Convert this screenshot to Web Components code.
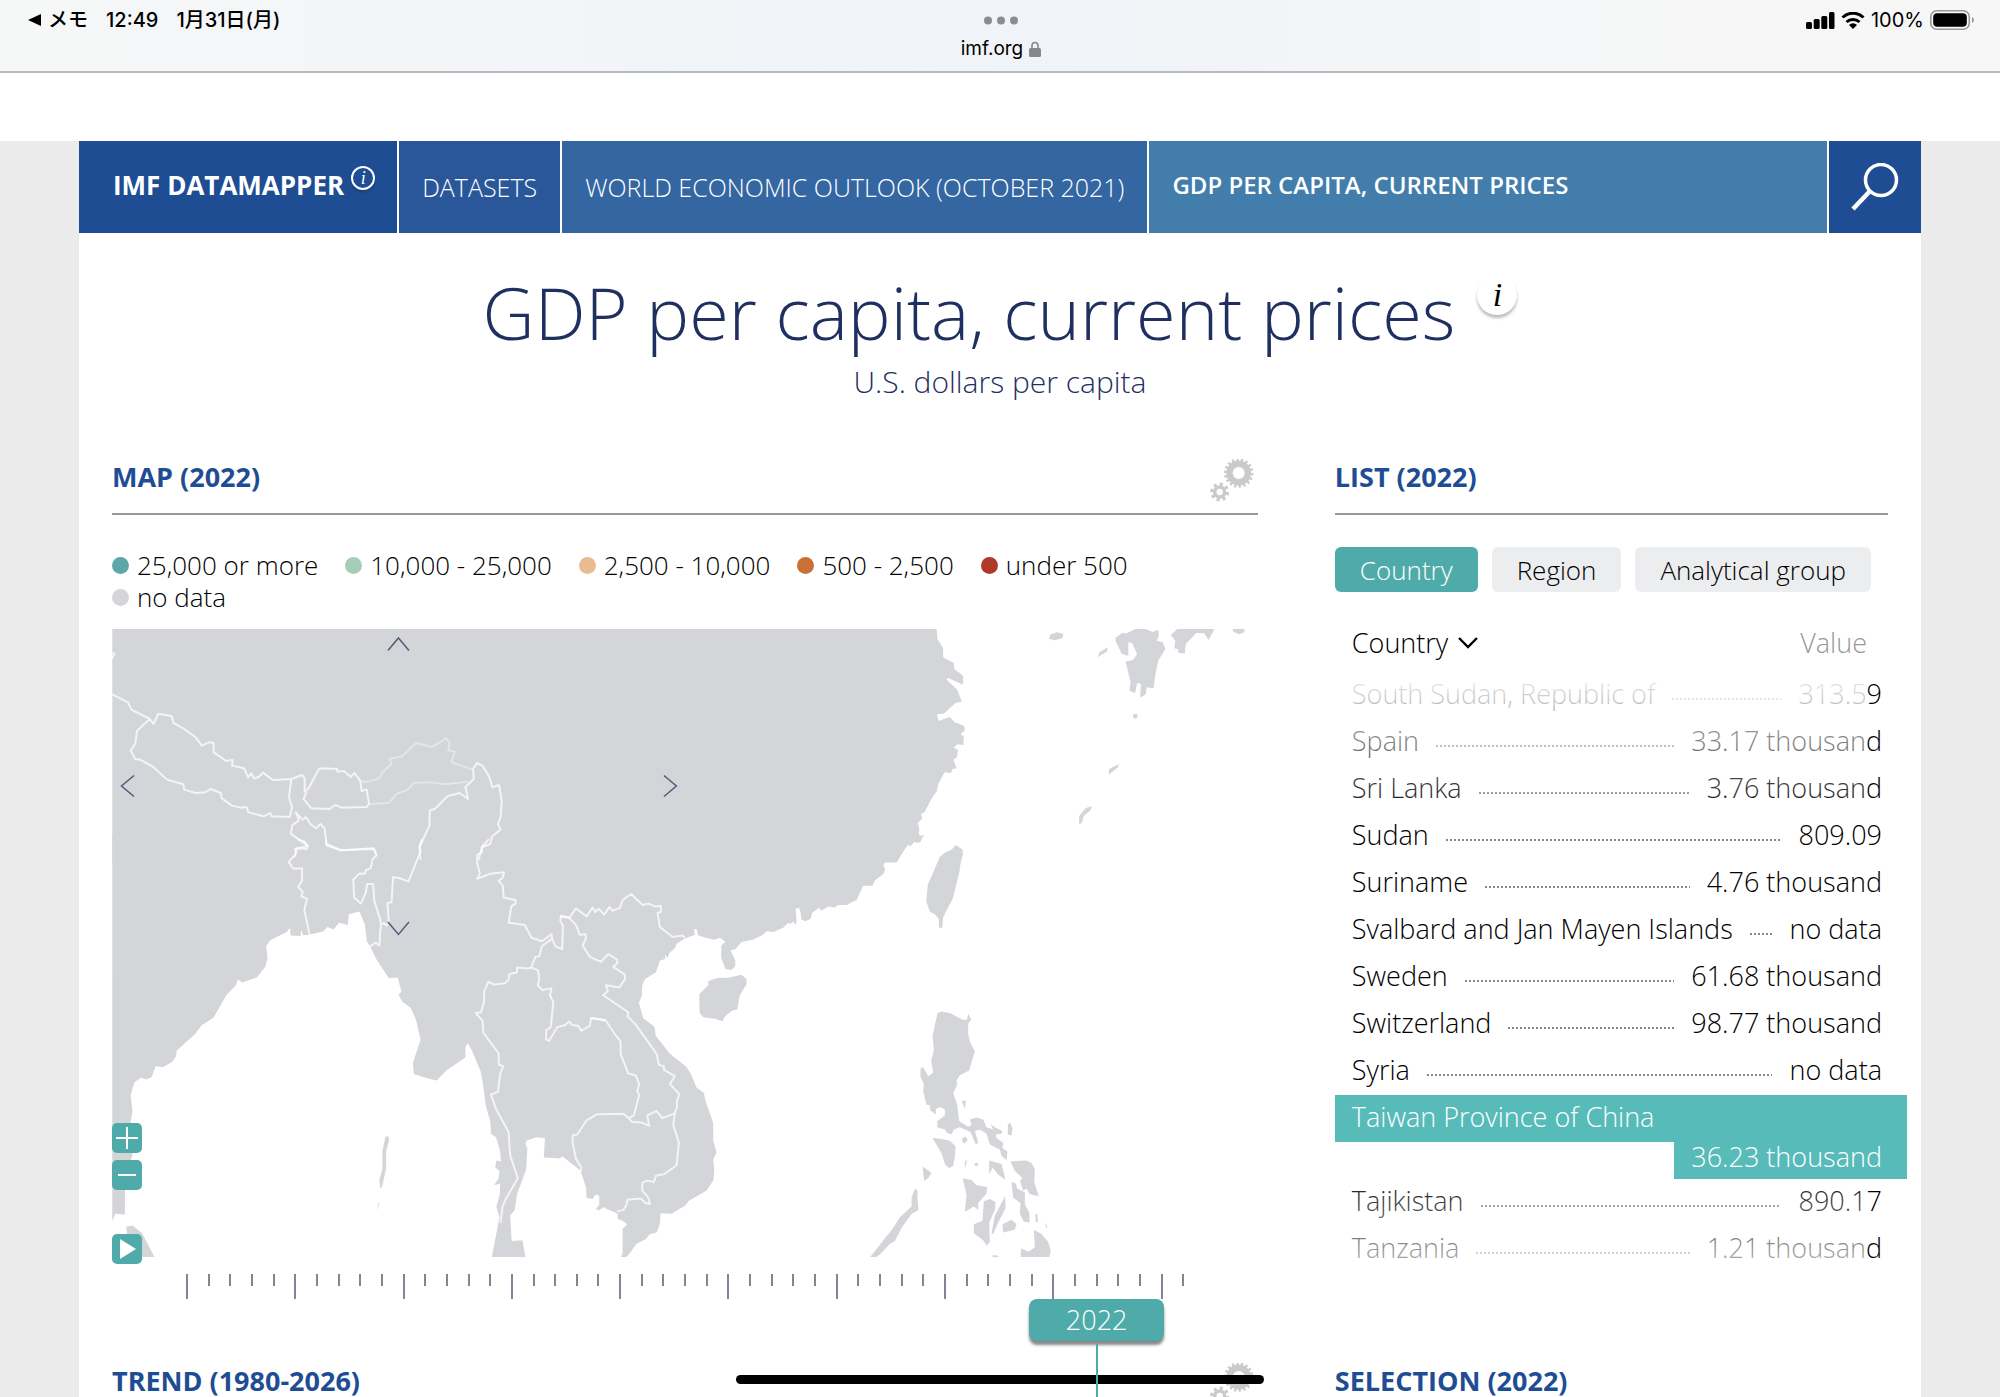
<!DOCTYPE html>
<html lang="en">
<head>
<meta charset="utf-8">
<meta name="viewport" content="width=device-width, initial-scale=1">
<title>GDP per capita, current prices</title>
<style>
:root{
  --font:"Open Sans","Noto Sans",sans-serif;
  --navy:#1f2f5f; --brand:#1f4d93; --teal:#4fabaa; --land:#d4d5d9; --rule:#98989a;
}
body{margin:0;height:100vh;display:flex;flex-direction:column;overflow:hidden;background:#fff;color:#000;font:300 27px/36px var(--font)}
</style>
</head>
<body>
<status-bar></status-bar>
<data-page>
  <data-nav slot="nav"></data-nav>
  <page-title slot="title" heading="GDP per capita, current prices">U.S. dollars per capita</page-title>
  <panel-section heading="MAP (2022)" gears>
    <map-legend></map-legend>
    <world-map></world-map>
    <time-line></time-line>
  </panel-section>
  <panel-section heading="LIST (2022)">
    <group-tabs></group-tabs>
    <country-list></country-list>
  </panel-section>
  <panel-section heading="TREND (1980-2026)" gears></panel-section>
  <panel-section heading="SELECTION (2022)"></panel-section>
</data-page>
<home-indicator></home-indicator>
<script>
const define = (name, render) => customElements.define(name, class extends HTMLElement {
  connectedCallback() {
    const root = this.attachShadow({ mode: 'open' });
    const t = document.createElement('template');
    t.innerHTML = '<style>*{box-sizing:border-box}button{font:inherit;color:inherit;border:0;background:none;padding:0;cursor:pointer}svg{display:block}</style>' + render(this);
    root.append(t.content.cloneNode(true));
  }
});

define('status-bar', () => `
<style>
:host{display:grid;flex:none;grid-template-columns:1fr auto 1fr;height:73px;padding:10px 25px 0 27px;
  border-bottom:2px solid #b9babd;box-sizing:border-box;color:#000;
  background:linear-gradient(90deg,#f6f7f7,#f1f4f8 40%,#f0f3f7 55%,#f5f6f7 75%,#f7f7f7);
  font:500 20px/20px Inter,"Noto Sans CJK JP",sans-serif}
.l,.r{display:flex;align-items:center;height:20px;gap:18px}
.l{font-weight:500}
.l span:first-child{display:flex;align-items:center;gap:6px}
.r{justify-content:flex-end;gap:6px;font-weight:400}
.c{display:flex;flex-direction:column;align-items:center;gap:14px;padding-top:6px;font-size:19px;font-weight:400}
.c div{display:flex;align-items:center;gap:6px}
</style>
<div class="l"><span><svg width="15" height="14"><path d="M14 1v12L1 7z"/></svg>メモ</span><span>12:49</span><span>1月31日(月)</span></div>
<div class="c"><svg width="36" height="9" fill="#8b8c8e"><circle cx="5" cy="4.500" r="4"/><circle cx="18" cy="4.500" r="4"/><circle cx="31" cy="4.500" r="4"/></svg>
<div>imf.org <svg width="12" height="16" fill="#86888b"><rect y="7" width="12" height="9" rx="1.500"/><path d="M3 8V4.500a3 3 0 0 1 6 0V8" fill="none" stroke="#86888b" stroke-width="1.600"/></svg></div></div>
<div class="r"><svg width="29" height="17"><rect x="0" y="10" width="6" height="7" rx="1.500"/><rect x="7.700" y="7" width="6" height="10" rx="1.500"/><rect x="15.300" y="4" width="6" height="13" rx="1.500"/><rect x="23" y="0" width="5.500" height="17" rx="1.500"/></svg>
<svg width="24" height="17" fill="none" stroke="#000" stroke-width="3"><path d="M1.500 5.500a15 15 0 0 1 21 0M5.500 10a9.500 9.500 0 0 1 13 0"/><path d="M12 17l-4-4a5.500 5.500 0 0 1 8 0z" fill="#000" stroke="none"/></svg>
100% <svg width="45" height="20"><rect x=".8" y=".8" width="38.500" height="18.400" rx="6" fill="none" stroke="#97989a" stroke-width="1.600"/><rect x="3.200" y="3.200" width="33.600" height="13.600" rx="4"/><path d="M42 7v6q2-1 2-3t-2-3" fill="#97989a"/></svg></div>`);

define('home-indicator', () => `
<style>:host{position:fixed;left:0;right:0;bottom:13px;display:flex;justify-content:center;pointer-events:none}
div{width:528px;height:9px;border-radius:5px;background:#000}</style><div></div>`);

define('data-page', () => `
<style>
:host{display:flex;flex:1;min-height:0;overflow:hidden;margin-top:68px;padding:0 79px;background:#ebebeb}
main{flex:1;min-width:0;background:#fff}
.grid{display:grid;grid-template-columns:minmax(0,29fr) minmax(0,14fr);column-gap:77px;row-gap:22px;padding:57px 33px 0}
</style>
<main><slot name="nav"></slot><slot name="title"></slot><div class="grid"><slot></slot></div></main>`);

define('info-button', el => `
<style>
:host{display:block}
button{display:block;width:24px;height:24px;border:2px solid #fff;border-radius:50%;color:#fff;
 font:italic 18px/18px "Liberation Serif",serif;text-align:center;box-shadow:0 2px 3px #0003}
:host([large]) button{width:40px;height:40px;border:0;background:#fff;color:#000;font:italic 34px/34px "Liberation Serif",serif;box-shadow:0 3px 3px #0004}
</style><button type="button">i</button>`);

define('data-nav', () => `
<style>
:host{display:block}
nav{display:flex;gap:2px;height:92px;color:#fff;font-size:25px;line-height:32px;white-space:nowrap}
a{color:inherit;text-decoration:none;display:flex;align-items:center;padding:0 23px;background:#29579a}
.home{background:var(--brand);padding:0 22px 4px 34px;gap:7px;font-size:26px;font-weight:700;display:flex;align-items:center}
.home a{background:none;padding:0}
info-button{padding-bottom:14px}
.w{background:#3466a2}
.g{background:#427dab;flex:1;font-size:24px;font-weight:600;padding-bottom:4px}
button{background:var(--brand);width:92px;display:grid;place-items:center;color:#fff}
</style>
<nav><div class="home"><a href="#">IMF DATAMAPPER</a><info-button></info-button></div>
<a href="#">DATASETS</a><a class="w" href="#">WORLD ECONOMIC OUTLOOK (OCTOBER 2021)</a><a class="g" href="#">GDP PER CAPITA, CURRENT PRICES</a>
<button type="button" aria-label="Search"><svg width="48" height="48" fill="none" stroke="#fff" stroke-width="3.500"><circle cx="30" cy="17" r="15.500"/><path d="M19 28L2 46" stroke-width="4.500"/></svg></button></nav>`);

define('page-title', el => `
<style>
:host{display:block;padding-top:35px;text-align:center;color:var(--navy)}
div{display:flex;justify-content:center;gap:22px}
info-button{padding-top:7px}
h1{margin:0;font-size:72px;line-height:88px;font-weight:300}
p{margin:6px 0 0;font-size:30px;line-height:40px}
</style><div><h1>${el.getAttribute('heading')}</h1><info-button large></info-button></div><p><slot></slot></p>`);

define('panel-section', el => `
<style>
:host{display:block;min-width:0}
header{display:flex;justify-content:space-between;align-items:flex-start;height:56px;border-bottom:2px solid var(--rule);padding-right:3px}
h2{margin:0;padding-top:4px;font-size:27px;line-height:28px;font-weight:700;color:var(--brand)}
</style><header><h2>${el.getAttribute('heading')}</h2>${el.hasAttribute('gears') ? `
<button type="button" aria-label="Settings"><svg width="46" height="46" viewBox="0 1 46 46" fill="none" stroke="#cacaca"><g><circle cx="29.700" cy="15" r="9.200" stroke-width="6.400"/><circle cx="29.700" cy="15" r="13.300" stroke-width="3" pathLength="36" stroke-dasharray="1 1"/><circle cx="10.700" cy="34" r="5" stroke-width="3.600"/><circle cx="10.700" cy="34" r="8" stroke-width="3" pathLength="16" stroke-dasharray="1 1"/></g></svg></button>` : ''}</header><slot></slot>`);

define('map-legend', () => `
<style>
:host{display:block;padding:34px 0 16px}
ul{display:flex;flex-wrap:wrap;column-gap:27px;margin:0;padding:0;list-style:none;font-size:26px;line-height:32px}
li{display:flex;align-items:center;gap:8px}
i{width:17px;height:17px;border-radius:50%}
</style><ul>${[['#5fa6ab', '25,000 or more'], ['#a5cdb9', '10,000 - 25,000'], ['#e8bc91', '2,500 - 10,000'], ['#cb7035', '500 - 2,500'], ['#b03929', 'under 500'], ['#d4d5d9', 'no data']]
.map(([c, t]) => `<li><i style="background:${c}"></i>${t}</li>`).join('')}</ul>`);

/* Map sheets: each group holds a part of the map in its own digitising grid. */
define('world-map', () => `
<style>
:host{display:block;position:relative}
svg.map{width:100%;height:auto}
.land{fill:var(--land)}
.line{fill:none;stroke:#fff;stroke-width:2;stroke-linejoin:round;opacity:.75}
.line path,.line{vector-effect:non-scaling-stroke}
.soft{opacity:.4}
.arrows path{fill:none;stroke:#525a78;stroke-width:1.500}
.zoom{position:absolute;left:0;bottom:-7px;display:flex;flex-direction:column;gap:7px}
.zoom button{width:30px;height:30px;border-radius:5px;background:var(--teal);display:grid;place-items:center}
.zoom button:last-child{margin-top:37px}
</style>
<svg class="map" viewBox="0 0 1146 628" role="img" aria-label="Map of East and South Asia">
<g class="land">
<g transform="translate(-12 -190) scale(.38265 .33333)"><path d="M32 570H1700V1270H32z"/></g>
<g transform="translate(568 -190) scale(.38265 .33333)">
<path d="M0 570H671L673 600 688 628V655L716 672 717 690 740 710V737L700 716 697 722 725 752 737 788 720 792 690 824 672 826 676 846 705 834 718 850 742 860 745 874 733 886 742 892 741 918 725 916 716 926 727 932 724 955 715 962 723 988 712 990 709 1002 692 1000 675 1035 672 1055 660 1075 640 1118 630 1126 634 1138 622 1152 626 1172 624 1185 632 1198 628 1210 612 1208 605 1220 597 1208 586 1232 570 1260V1266H0z"/>
<path d="M1138 597L1155 583 1168 583 1190 570H1218L1235 579 1250 572 1252 590 1246 605 1262 610 1269 630 1250 665 1243 705 1238 748 1220 745 1218 765 1203 776 1205 735 1195 732 1190 762 1175 755 1178 730 1165 668 1185 662 1195 645 1182 612 1172 610 1172 650 1155 645 1140 610z"/>
<path d="M1283 588L1300 570H1397L1382 603 1370 583 1350 582 1335 600 1322 615 1320 643 1303 642 1302 630 1292 628 1295 605zM1444 570H1476L1475 580 1462 586 1447 578zM965 600L968 587 985 580 1002 584 1000 597 980 604zM1092 655L1097 640 1118 625 1117 637zM1185 826L1193 824 1197 832 1192 840 1185 836zM1121 1007L1122 990 1147 975 1145 985zM1043 1155L1044 1130 1060 1108 1076 1101 1074 1113 1056 1130 1050 1153z"/></g>
<g transform="translate(-12 210) scale(.38265 .35524)">
<path d="M32-10H1240V920L1208 893 1203 900 1160 897 1163 842 1140 840 1115 850 1112 858 1117 870 1114 930 1090 1000 1084 1045 1072 1060 1076 1132 1104 1130 1112 1178H1024L1044 1065 1036 1035 1045 1000 1046 970 1030 975 1042 955 1044 935 1033 925 1036 905 1048 908 1046 880 1035 840 1022 830 1020 795 1008 750 1001 690 995 655 972 595 961 575 955 585V615L905 652 880 680 860 675 820 662 818 630 838 565 826 510 812 475 790 458 780 438 788 430 778 390 755 392 722 338 706 303 698 290 692 240 678 204 650 212 648 242 625 236 610 255 594 248 585 260 548 270 530 271 526 255 524 273 498 272 497 250 488 262 445 285 434 303 438 335 432 360 410 390 372 404 360 396 355 412 330 440 297 503 265 525 250 548 200 596 199 612 188 628 165 642 145 640 135 670 122 677 107 672 90 685 80 722 85 765 80 800 85 890 65 950V1057L40 1055 32 1078z"/>
<path d="M68 1092L85 1088 110 1110 143 1178H80zM746 838H755L755 850 748 880V925L738 978 732 984 730 960 738 930V880zM727 1022L729 1030 725 1046z"/></g>
<g transform="translate(448 210) scale(.33333 .35524)">
<path d="M0-10H1095L1080 0 1072 12 1055 2 1050 10 1035 28 1010 66H975L970 75 976 84 972 97 945 117 938 132H910L890 172 860 186H835L825 193 805 190 783 203 778 194 757 208 752 225 735 232 724 226 722 206 717 193 707 197 710 228 708 242 700 233 690 240 685 236 670 250 640 262 620 260 605 272 580 283 545 290 527 310 512 314 526 342V358L515 368 497 367 484 335V300L497 290 480 278 462 284 438 278 415 272 410 254H402L405 270 375 280 350 295 345 308 330 320 322 335 315 325 316 338 300 342 288 375 255 395 247 412 246 440 237 462 250 505 283 528 288 555 330 605 380 642 392 660 410 700 432 715 436 735 460 800V850L470 882 460 903 463 930 461 960 440 990 385 1020 376 1032 335 1055 302 1054 300 1085 290 1108 270 1112 258 1126 230 1140 210 1166 198 1178H183L188 1165V1098L202 1085 188 1075 174 1070 172 1054 140 1042 130 1036 118 1046 108 1042 118 1030V1005L108 1000 98 1014 80 1010 78 980 62 935 30 908 8 892H0z"/>
<path d="M545 382L560 395V408L540 440 532 480 517 483 495 500 488 513 465 506 430 502 419 490 418 437 445 412V400L475 391H505z"/></g>
<g transform="translate(748 210) scale(.33333 .35524)">
<path d="M133-5L150 22 165 5 180 10 188-5zM287 17L308 30 309 42 302 70 298 95 290 125 278 170 262 197 250 220 247 250H237V225L225 212 210 205 199 175 204 128 215 105 240 50 256 38 276 30z"/>
<path d="M233 490L245 486 270 490 310 510 322 508 325 492 334 508 325 520V550L332 575 345 597 328 652 300 665 290 680 292 692 280 715 292 748 298 795 325 810 335 805 330 790 350 784 370 790 380 812 400 818 392 803 405 812 427 822 425 830 408 832 410 842 430 855 428 870 443 880 440 905 425 892 420 875 390 860 380 830 360 818 345 822 355 855 348 860 332 825 300 812 282 818 275 832 262 828 255 818 232 812V795L255 778V762L240 755 228 760V776L212 765 210 750 200 748 190 710 192 690 182 670V645L190 643 205 668 220 658 214 625 222 595 218 555 226 520z"/>
<path d="M305 737H318L315 760zM444 803L452 800 458 815 455 835 444 832zM218 842L245 845 270 850 287 865 285 895 280 920 268 927 255 915 245 885zM305 845L318 838 323 850 312 858zM188 922L215 940 205 955 193 962zM315 908L322 903 315 930zM343 915L350 910 356 918 348 922zM388 905L425 915 437 960 415 945 398 925 388 945zM452 908L500 905 515 912 525 930 523 965 537 1006 510 1000 500 985 490 990 480 962 488 955 465 935zM455 965L468 970 472 985 495 995V1030L508 1050 510 1080 492 1078 480 1055 482 1025 460 1010zM308 955L335 960 350 975 382 980 380 998 355 1025 355 1045 342 1035 315 1050 320 1000zM372 1020L390 1014 407 1022 405 1045 388 1080 390 1135 380 1145 370 1130 342 1110 342 1085 368 1075zM436 1005L437 1040 415 1080 400 1112 395 1110 405 1060zM428 1085L455 1072 470 1085 465 1100 430 1108zM526 1058L532 1055 535 1080 528 1078zM555 1080L563 1092 560 1096zM522 1100L545 1112 565 1135 573 1160 568 1178H482L484 1152 505 1162 525 1150zM398 1172H410L420 1178H398zM165 985L173 990V1015L176 1045 155 1056 125 1095 105 1132 90 1140 60 1170 48 1178H30L100 1095 120 1065 155 1035 155 1010z"/></g>
</g>
<g transform="translate(-12 -190) scale(.38265 .33333)">
<path class="line" d="M28 640L38 645 30 660M32 766L73 790 82 812 130 840M130 840L140 855 152 824 187 831 192 852 220 870 250 895 266 920 285 910 297 912V940L330 966 347 962 345 980 377 988 387 1015 395 1003 402 1018 415 1014 426 1001 452 1023 500 1020 528 1008 535 1018V1058L545 1048 572 990 580 988 620 990 620 998 638 996 655 1014 665 1002 680 1025 684 1056 697 1052 703 1095 697 1104 632 1106 615 1098 600 1110 552 1108 532 1080 540 1060M500 1020L494 1075 502 1105 496 1134 448 1132 445 1122 428 1132 388 1120 383 1104 368 1106 345 1100 318 1078 316 1062 290 1050 275 1060 250 1062 220 1052 218 1036 175 1022 137 982 105 962 92 960 80 935 92 915 97 875 130 840M523 1136L512 1120 520 1144 502 1160 499 1185 520 1202 543 1220 540 1230 515 1228 508 1255M512 1122L530 1142 538 1134 550 1155 565 1168 576 1155 587 1168 592 1215 630 1234 715 1230 723 1248M975 990L977 1020 955 1044 962 1080 940 1062 908 1072 875 1110 862 1114 861 1160 835 1225 838 1262M975 990L985 972 1000 980 1018 1015 1025 1045 1043 1038 1050 1085 1047 1135 1040 1155 1047 1172 1025 1192 1020 1215 998 1225 990 1262"/>
<path class="line soft" d="M684 1028L700 1028 730 1018 738 1000 762 975 757 960 790 952 826 912 868 924 905 898 914 912 910 934 928 938 918 970 975 992M703 1095L755 1092 775 1065 805 1052 820 1032 865 1030 900 1036 962 1028"/></g>
<g transform="translate(-12 210) scale(.38265 .35524)">
<path class="line" d="M515 0L535 8 542 20 510 28 512 42 493 65 505 83H528V118L518 134 530 150 526 162 541 168 534 200 548 270M590 0L592 18 630 32 715 26 723 46 712 58 708 82 695 88 692 98 678 97 662 115 664 165 682 182 695 150 698 127H714L717 175 732 225 734 240 730 300 720 292 706 303M734 242L742 236 748 244 755 236 751 180 762 178 766 108 782 110 806 120 838 35 835 20 842 0M1017 0L998 22 998 38 986 45V70L993 97 986 112 1020 98 1056 94 1052 110 1042 118 1053 132 1055 165 1086 172V182L1075 190 1068 236 1110 242 1128 278 1155 288 1180 268 1182 282 1190 302 1208 310 1210 245 1203 230 1205 216 1228 222M1180 282L1155 302 1148 330 1138 332 1127 362 1118 365 1090 362 1090 376 1070 380 1068 396 1058 406 1030 410 1015 402 1004 430 1004 458 996 488 982 490 1000 512 1002 545 1042 604V635L1054 640 1046 660 1040 712 1022 720 1035 760 1068 826 1072 890 1092 955 1060 1015 1052 1035 1047 1080M1127 362L1145 370 1148 395 1144 412 1156 425 1180 420 1176 440 1185 460 1178 530 1166 538V565L1174 568 1195 530 1216 524 1226 514 1234 524 1250 526 1258 540 1280 526 1284 504 1322 510"/></g>
<g transform="translate(448 210) scale(.33333 .35524)">
<path class="line" d="M28 222L0 218M28 222L48 195 80 218 98 193 106 206 115 196 133 213 148 192 158 202 180 194 188 172 214 155 248 186 265 182 285 190 303 188V206L293 208 300 248 338 276 368 272 375 278M28 222L48 242 60 270 77 268 78 280 68 300 90 332 123 346 145 324 172 340V350L160 360 195 382V395L178 418 138 412 144 428 130 440 205 488 203 500 225 520 290 605 297 636 312 640V650L345 668 330 690 358 718 350 742 352 752 345 772 308 786 290 766 262 778 268 808 245 798 215 796 207 786 222 778 238 720 232 710 238 690 228 666 205 660 182 605V570L165 550 138 512 92 504M207 786L190 774 112 775 80 792 52 832 38 834V855L48 900 64 925 62 938M345 772L340 805 357 855 350 918 340 926 312 944 288 948 282 966 262 962 247 968V990L265 1010 270 1028 255 1024 243 1012 202 1016 200 1030 190 1045 172 1048"/></g>
<g class="arrows"><path d="M276 21.500L286.500 9 297 21.500M276 293L286.500 305.500 297 293M22 146.500L9.500 157 22 167.500M552 146.500L564.500 157 552 167.500"/></g>
</svg>
<div class="zoom">
<button type="button" aria-label="Zoom in"><svg width="24" height="24" stroke="#fff" stroke-width="2"><path d="M1 12h22M12 1v22"/></svg></button>
<button type="button" aria-label="Zoom out"><svg width="24" height="24" stroke="#fff" stroke-width="2"><path d="M3 12h18"/></svg></button>
<button type="button" aria-label="Play"><svg width="24" height="24" fill="#fff"><path d="M5 2l16 10L5 22z"/></svg></button>
</div>`);

define('time-line', () => {
  let ticks = '';
  for (let y = 1980; y <= 2026; y++) ticks += `<i${y % 5 ? '' : ' class="l"'}></i>`;
  return `
<style>
:host{display:block;position:relative;padding-top:17px}
.ticks{display:flex;justify-content:space-between;height:25px;padding:0 73px 0 74px}
i{width:2px;height:12px;background:#85829b}
.l{height:25px}
.s{position:relative;height:42px;margin:0 7px}
input{display:block;appearance:none;margin:0;width:100%;height:42px;background:none}
input::-webkit-slider-thumb{appearance:none;width:135px;height:42px;border:0;border-radius:8px;background:var(--teal);box-shadow:0 4px 3px #0007}
label{position:absolute;top:0;left:calc((100% - 135px)*.91304);width:135px;text-align:center;line-height:41px;color:#fff;pointer-events:none;z-index:1}
label::after{content:"";position:absolute;left:67px;top:45px;height:80px;width:2px;background:#4fabaa}
</style><div class="ticks">${ticks}</div><div class="s"><input id="year" type="range" min="1980" max="2026" value="2022"><label for="year">2022</label></div>`;
});

define('group-tabs', () => `
<style>
:host{display:flex;gap:14px;padding-top:32px}
button{height:45px;padding:0 25px;border-radius:6px;background:#ecedef;color:#000;font-size:26px;white-space:nowrap}
.on{background:var(--teal);color:#fff}
</style><button type="button" class="on">Country</button><button type="button">Region</button><button type="button">Analytical group</button>`);

define('country-list', () => `
<style>
:host{display:block;position:relative;margin:28px -19px 0 0;color:#000}
table,thead,tbody{display:block}
thead tr{display:flex;justify-content:space-between;align-items:center;padding:0 40px 0 17px;height:46px;margin-bottom:6px}
th{padding:0;font-weight:inherit}
th button{display:flex;align-items:center;gap:10px}
.v{color:#98989a}
tbody{position:relative}
tbody tr{display:flex;height:47px;padding:0 25px 0 17px;line-height:43px;white-space:nowrap}
td{padding:0}
td:first-child{flex:1;display:flex;gap:17px}
td:first-child::after{content:"";flex:1;height:2px;margin:26px 17px 0 0;background:repeating-linear-gradient(90deg,#888 0 2px,#fff 2px 4px)}
tbody tr.on{position:relative;z-index:1;height:84px;flex-direction:column;align-items:flex-end;padding:0;color:#fff}
.on td:first-child{align-self:stretch;flex:none;height:47px;padding-left:17px;background:#57bbba}
.on td:first-child::after{display:none}
.on td:last-child{height:37px;line-height:30px;padding:0 25px 0 17px;background:#57bbba}
tbody::before,tbody::after{content:"";position:absolute;left:0;right:40px;pointer-events:none}
tbody::before{top:0;height:148px;background:linear-gradient(#fffffff5,#fff0)}
tbody::after{bottom:-34px;height:138px;background:linear-gradient(#fff0,#fff)}
</style>
<table><thead><tr><th><button type="button">Country<svg width="20" height="14" fill="none" stroke="#000" stroke-width="2.400"><path d="M1 2l9 9 9-9"/></svg></button></th><th class="v"><button type="button">Value</button></th></tr></thead><tbody>
${[['South Sudan, Republic of', '313.59'], ['Spain', '33.17 thousand'], ['Sri Lanka', '3.76 thousand'], ['Sudan', '809.09'], ['Suriname', '4.76 thousand'], ['Svalbard and Jan Mayen Islands', 'no data'], ['Sweden', '61.68 thousand'], ['Switzerland', '98.77 thousand'], ['Syria', 'no data'], ['Taiwan Province of China', '36.23 thousand', 1], ['Tajikistan', '890.17'], ['Tanzania', '1.21 thousand']]
.map(([n, v, on]) => `<tr${on ? ' class="on"' : ''}><td>${n}</td><td>${v}</td></tr>`).join('')}
</tbody></table>`);
</script>
</body>
</html>
